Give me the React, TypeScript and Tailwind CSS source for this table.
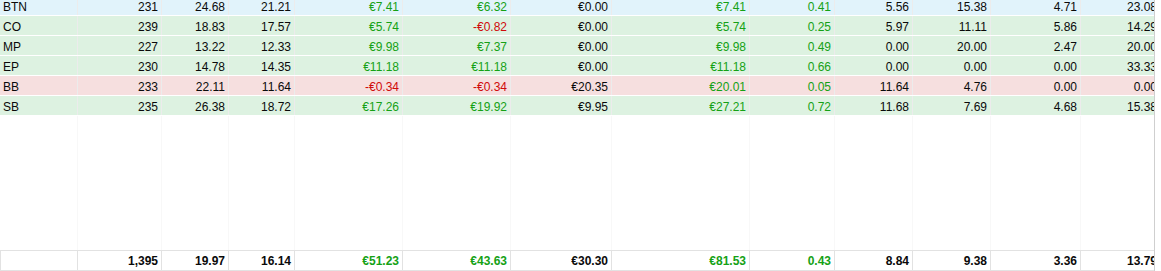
const cols =
  'grid grid-cols-[78px_84px_67px_66px_108px_108px_101px_138px_85px_78px_78px_90px_80px]'

type Tone = 'g' | 'r' | 'k'

interface Row {
  pos: string
  bg: string
  cells: [string, Tone][]
}

const G = 'g' as const
const R = 'r' as const
const K = 'k' as const

const rows: Row[] = [
  {
    pos: 'BTN',
    bg: 'bg-[#e1f3fb]',
    cells: [['231', K], ['24.68', K], ['21.21', K], ['€7.41', G], ['€6.32', G], ['€0.00', K], ['€7.41', G], ['0.41', G], ['5.56', K], ['15.38', K], ['4.71', K], ['23.08', K]],
  },
  {
    pos: 'CO',
    bg: 'bg-[#ddf2e1]',
    cells: [['239', K], ['18.83', K], ['17.57', K], ['€5.74', G], ['-€0.82', R], ['€0.00', K], ['€5.74', G], ['0.25', G], ['5.97', K], ['11.11', K], ['5.86', K], ['14.29', K]],
  },
  {
    pos: 'MP',
    bg: 'bg-[#ddf2e1]',
    cells: [['227', K], ['13.22', K], ['12.33', K], ['€9.98', G], ['€7.37', G], ['€0.00', K], ['€9.98', G], ['0.49', G], ['0.00', K], ['20.00', K], ['2.47', K], ['20.00', K]],
  },
  {
    pos: 'EP',
    bg: 'bg-[#ddf2e1]',
    cells: [['230', K], ['14.78', K], ['14.35', K], ['€11.18', G], ['€11.18', G], ['€0.00', K], ['€11.18', G], ['0.66', G], ['0.00', K], ['0.00', K], ['0.00', K], ['33.33', K]],
  },
  {
    pos: 'BB',
    bg: 'bg-[#f6dfdf]',
    cells: [['233', K], ['22.11', K], ['11.64', K], ['-€0.34', R], ['-€0.34', R], ['€20.35', K], ['€20.01', G], ['0.05', G], ['11.64', K], ['4.76', K], ['0.00', K], ['0.00', K]],
  },
  {
    pos: 'SB',
    bg: 'bg-[#ddf2e1]',
    cells: [['235', K], ['26.38', K], ['18.72', K], ['€17.26', G], ['€19.92', G], ['€9.95', K], ['€27.21', G], ['0.72', G], ['11.68', K], ['7.69', K], ['4.68', K], ['15.38', K]],
  },
]

const totals: [string, Tone][] = [
  ['1,395', K], ['19.97', K], ['16.14', K], ['€51.23', G], ['€43.63', G], ['€30.30', K],
  ['€81.53', G], ['0.43', G], ['8.84', K], ['9.38', K], ['3.36', K], ['13.79', K],
]

const tone = (t: Tone) =>
  t === 'g' ? 'text-[#15a115]' : t === 'r' ? 'text-[#d00a0a]' : 'text-[#0a0a0a]'

export default function App() {
  return (
    <div className="flex h-[271px] w-[1161px] overflow-hidden bg-white font-['Liberation_Sans',Arial,sans-serif] text-[12px] leading-none">
      <div className="flex w-[1155px] shrink-0 flex-col overflow-hidden border-r border-[#cfcfcf]">
        <div className="-mt-[4px] flex flex-col">
          {rows.map((row) => (
            <div key={row.pos} className={`${cols} h-[20px] w-[1161px] border-b border-white ${row.bg}`}>
              <div className="flex items-center border-r border-[#ececec] pl-[3px] pt-[2px] text-[#0a0a0a]">{row.pos}</div>
              {row.cells.map(([v, t], i) => (
                <div
                  key={i}
                  className={`flex items-center justify-end border-r border-[#ececec] pr-[3px] pt-[2px] tabular-nums ${tone(t)}`}
                >
                  {v}
                </div>
              ))}
            </div>
          ))}
        </div>
        <div className={`${cols} w-[1161px] flex-1`}>
          {Array.from({ length: 13 }).map((_, i) => (
            <div key={i} className="border-r border-[#f8f8f8]" />
          ))}
        </div>
        <div className={`${cols} h-[21px] w-[1161px] border-y border-[#e2e2e2] font-bold`}>
          <div className="border-x border-[#e2e2e2]" />
          {totals.map(([v, t], i) => (
            <div
              key={i}
              className={`flex items-center justify-end border-r border-[#e2e2e2] pr-[3px] pt-[1px] tabular-nums ${tone(t)}`}
            >
              {v}
            </div>
          ))}
        </div>
      </div>
    </div>
  )
}
